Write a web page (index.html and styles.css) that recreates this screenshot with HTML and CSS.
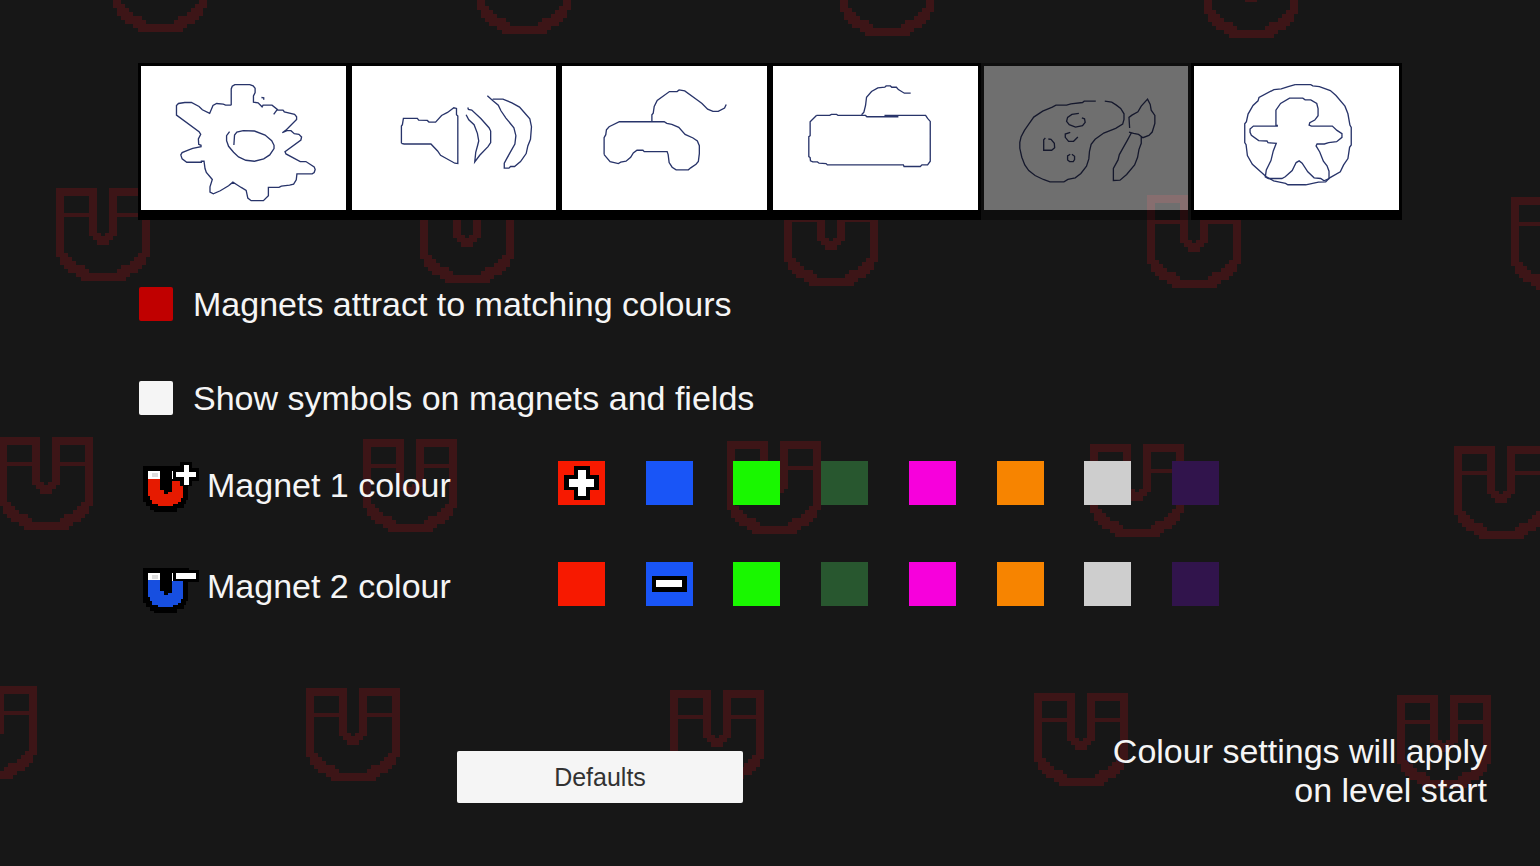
FILE: index.html
```html
<!DOCTYPE html>
<html lang="en">

<head>
    <meta charset="UTF-8">
    <meta name="viewport" content="width=device-width, initial-scale=1.0">
    <title>Settings - Colours</title>
    <link rel="stylesheet" href="styles.css">
</head>

<body>

    <!-- Background magnets -->
    <svg class="backdrop" aria-hidden="true" shape-rendering="crispEdges">
        <defs>
            <symbol id="magnet" viewBox="0 0 282 282" preserveAspectRatio="none">
                <path fill-rule="evenodd" d="M0 0H122V135H135V147H147V135H159V0H282V209H270V234H258V246H246V257H221V270H209V281H74V270H61V257H36V246H24V234H12V209H0Z
                    M24 24V75H98V24Z M184 24V75H258V24Z
                    M24 87V197H36V209H49V221H61V234H86V246H98V257H184V246H196V234H221V221H233V209H246V197H258V87H184V146H171V159H159V173H122V159H110V146H98V87Z" />
            </symbol>
        </defs>
        <use href="#magnet" x="113" y="-61" width="94" height="93" />
        <use href="#magnet" x="477" y="-59" width="94" height="93" />
        <use href="#magnet" x="840" y="-57" width="94" height="93" />
        <use href="#magnet" x="1204" y="-55" width="94" height="93" />
        <use href="#magnet" x="56" y="188" width="94" height="93" />
        <use href="#magnet" x="420" y="190" width="94" height="93" />
        <use href="#magnet" x="784" y="193" width="94" height="93" />
        <use href="#magnet" x="1147" y="195" width="94" height="93" />
        <use href="#magnet" x="1511" y="197" width="94" height="93" />
        <use href="#magnet" x="-1" y="437" width="94" height="93" />
        <use href="#magnet" x="363" y="439" width="94" height="93" />
        <use href="#magnet" x="727" y="441" width="94" height="93" />
        <use href="#magnet" x="1090" y="444" width="94" height="93" />
        <use href="#magnet" x="1454" y="446" width="94" height="93" />
        <use href="#magnet" x="-57" y="686" width="94" height="93" />
        <use href="#magnet" x="306" y="688" width="94" height="93" />
        <use href="#magnet" x="670" y="690" width="94" height="93" />
        <use href="#magnet" x="1034" y="693" width="94" height="93" />
        <use href="#magnet" x="1397" y="695" width="94" height="93" />
    </svg>

    <div class="settings">

        <nav class="tabs">
            <button type="button" class="tab" aria-label="General">
                <svg viewBox="33 32 615 434">
                    <path d="M304 150V101L307 93L315 88H360L370 92L376 99V112L371 122V141L385 143L397 155L400 150H427L443 163L432 178 M395 127L402 128V134 M443 165H460L464 170L495 178L501 185V193L468 226L458 233L472 227H484L494 236L508 238L516 246L514 255L466 290L469 297L512 320H529L554 336L557 344L554 353L548 357H502L500 375L492 388L480 391L455 394L448 398H416V423L401 438H364L354 430L349 407L334 398L320 389L309 382L296 393L271 408L250 417L240 412V396L247 374L229 353L225 341L222 319H214V322H170L156 312L152 300L156 293L178 284L188 280L213 275V271L206 268L205 252L212 238L207 230L139 180V151L145 145L164 142H184L207 154L217 164L239 175L249 151L260 145L280 147L287 150H304" />
                    <path d="M299 230L290 242V257L296 274L311 292L326 306L348 316L374 319L402 312L420 300L433 281V271L426 257L406 240L374 228L340 227L321 231L314 240L312 270" />
                </svg>
            </button>
            <button type="button" class="tab" aria-label="Sound">
                <svg viewBox="21 32 615 434">
                    <path d="M169 265V213L172 209L175 190H217L221 195L247 196L252 201H272L290 181L308 172L327 158L335 160V179L339 183V326L330 325L287 301L278 288L258 267H177L169 265" />
                    <path d="M369 157L371 163L381 165L409 191L433 218L438 228V263L430 275L405 301L390 321L393 292L399 270L402 258L398 235L388 209L372 194L364 179" />
                    <path d="M428 122L444 136L461 150L469 167L484 189L508 218L514 242L511 267L496 294L486 312L479 325V340H493L498 335L510 335L528 320L545 296L550 273L558 253L561 215L556 191L540 173L525 156L502 143L475 132H444" />
                </svg>
            </button>
            <button type="button" class="tab" aria-label="Controller">
                <svg viewBox="21 32 615 434">
                    <path d="M291 199V179L295 174L298 154L307 136L344 109H367L373 104L390 107L433 138L442 145L459 162L475 169H491L510 159L515 148" />
                    <path d="M147 299V248L152 239L154 224L162 215L193 200H328L336 205L351 208L372 217L391 238L415 249L428 258L434 272V296L431 320L424 328L408 339L401 345H364L352 337L343 323L340 299L337 290H268L264 286H246L235 294L227 307L213 319L197 322L190 326L165 320L147 299" />
                </svg>
            </button>
            <button type="button" class="tab" aria-label="Keyboard">
                <svg viewBox="15 32 615 434">
                    <path d="M281 179L288 171L293 151L296 126L311 109L330 98L351 96L355 92H368L372 96H386L392 103L410 114H429" />
                    <path d="M145 181H185L190 178H206L210 181H293L297 185H392 M350 181H474L480 190L488 199V319L480 330H463L458 335H409L407 330H178L174 326L153 325L148 321H134L127 318L126 308L122 305V245L126 242V200L145 181" />
                </svg>
            </button>
            <button type="button" class="tab selected" aria-label="Colours" aria-current="page">
                <svg viewBox="24 32 615 434">
                    <path d="M360 138H325L320 142L285 146L272 150H240L229 156L200 168L173 186L158 207L145 226L135 245L131 262V280L137 307L146 330L158 347L177 362L202 374L222 381H264L276 374L298 369L315 356L332 334L339 312L341 289L346 268L358 253L384 234L420 220L441 207L445 193V176L435 160L422 150L408 141L387 138" />
                    <path d="M309 175L288 178L275 187L272 199L280 209L299 216L320 212L328 202L326 191L318 188 M283 232L268 237V247L278 259H293L306 246 M208 249L203 254V286H227L236 278L235 265L225 253L217 252 M283 298L275 303V315L281 320H292L296 314V304L288 298" />
                    <path d="M462 219L460 187L469 180L487 170L497 153L516 132L524 148L527 165L538 181V205L530 231L520 241L502 248L489 238L474 235L460 231 M467 234L455 256L441 281L431 299L427 315L413 341V377L433 376L453 359L477 330L486 307L490 284L497 265V246" />
                </svg>
            </button>
            <button type="button" class="tab" aria-label="Accessibility">
                <svg viewBox="27 32 615 434">
                    <path d="M331 88H378L384 92L404 94L437 106L454 121L481 153L490 176L496 210L500 217V270L495 277L490 311L477 330L467 351L435 369L423 381L401 382L363 390H309L302 386L266 378L243 365L202 328L187 302L183 269L179 263V206L184 200L189 177L204 151L219 137L222 127L267 103L289 101L310 94L331 88" />
                    <path d="M279 211H273V165L287 145L314 129H354L361 134H378L396 145L400 160V182L390 195L375 203L373 210L380 213H443L457 226L472 236V247L456 260L432 263L419 267H397L394 273L405 291L416 319L427 333L433 349V371L418 378L408 371L388 369L369 351L352 325L343 318L334 323L322 347L301 366L291 371H250L241 366L244 345L258 317L265 288L274 265L249 263L246 258L221 257L199 241L195 232V222L205 213H279" />
                </svg>
            </button>
        </nav>

        <label class="option">
            <input type="checkbox" checked>
            <span>Magnets attract to matching colours</span>
        </label>

        <label class="option">
            <input type="checkbox">
            <span>Show symbols on magnets and fields</span>
        </label>

        <div class="magnet-row" role="radiogroup" aria-labelledby="magnet1">
            <svg class="magnet-icon" viewBox="36 33 174 156" shape-rendering="crispEdges">
                <path fill="#000" d="M39 48H150V36H186V54H207V93H186V109H175V149H169V161H161V173H141V185H72V179H60V167H48V155H39Z" />
                <path fill="#e61a00" d="M54 86H89V120H101V132H113V126H126V93H149V109H159V143H153V155H143V161H130V168H83V161H66V149H60V137H54Z" />
                <path fill="#fff" d="M54 63H89V86H54Z M126 63H130V87H126Z M161 45H176V67H198V81H176V104H161V81H138V67H161Z" />
                <path fill="#ddd" d="M66 69H84V81H66Z" />
            </svg>
            <span class="magnet-name" id="magnet1">Magnet 1 colour</span>
            <div class="swatches">
                <label class="swatch red">
                    <input type="radio" name="magnet1" aria-label="Red" checked>
                    <svg viewBox="53 95 140 130" shape-rendering="crispEdges">
                        <path fill="#000" d="M101 110H147V136H176V182H147V212H101V182H72V136H101Z" />
                        <path fill="#fff" d="M112 121H135V148H161V171H135V198H112V171H85V148H112Z" />
                    </svg>
                </label>
                <label class="swatch blue"><input type="radio" name="magnet1" aria-label="Blue"></label>
                <label class="swatch green"><input type="radio" name="magnet1" aria-label="Green"></label>
                <label class="swatch forest"><input type="radio" name="magnet1" aria-label="Dark green"></label>
                <label class="swatch pink"><input type="radio" name="magnet1" aria-label="Pink"></label>
                <label class="swatch orange"><input type="radio" name="magnet1" aria-label="Orange"></label>
                <label class="swatch grey"><input type="radio" name="magnet1" aria-label="Grey"></label>
                <label class="swatch purple"><input type="radio" name="magnet1" aria-label="Purple"></label>
            </div>
        </div>

        <div class="magnet-row" role="radiogroup" aria-labelledby="magnet2">
            <svg class="magnet-icon" viewBox="36 336 174 156" shape-rendering="crispEdges">
                <path fill="#000" d="M39 354H176V360H207V396H175V452H169V464H161V476H141V488H72V482H60V470H48V458H39Z" />
                <path fill="#174fe0" d="M54 391H89V423H101V435H113V429H126V394H159V446H153V458H143V464H130V471H83V464H66V452H60V440H54Z" />
                <path fill="#fff" d="M54 369H89V391H54Z M126 369H130V392H126Z M138 370H198V387H138Z" />
                <path fill="#ddd" d="M66 374H84V386H66Z" />
            </svg>
            <span class="magnet-name" id="magnet2">Magnet 2 colour</span>
            <div class="swatches">
                <label class="swatch red"><input type="radio" name="magnet2" aria-label="Red"></label>
                <label class="swatch blue">
                    <input type="radio" name="magnet2" aria-label="Blue" checked>
                    <svg viewBox="317 396 140 130" shape-rendering="crispEdges">
                        <path fill="#000" d="M336 437H438V486H336Z" />
                        <path fill="#fff" d="M348 450H423V471H348Z" />
                    </svg>
                </label>
                <label class="swatch green"><input type="radio" name="magnet2" aria-label="Green"></label>
                <label class="swatch forest"><input type="radio" name="magnet2" aria-label="Dark green"></label>
                <label class="swatch pink"><input type="radio" name="magnet2" aria-label="Pink"></label>
                <label class="swatch orange"><input type="radio" name="magnet2" aria-label="Orange"></label>
                <label class="swatch grey"><input type="radio" name="magnet2" aria-label="Grey"></label>
                <label class="swatch purple"><input type="radio" name="magnet2" aria-label="Purple"></label>
            </div>
        </div>

    </div>

    <div class="footer">
        <button type="button" class="defaults">Defaults</button>
        <p class="note">Colour settings will apply<br>on level start</p>
    </div>

</body>

</html>
```
FILE: styles.css
```css
* {
    box-sizing: border-box;
}

body {
    font-family: "Liberation Sans", Arial, sans-serif;
    font-size: 34px;
    margin: 0;
    min-height: 100vh;
    display: flex;
    flex-direction: column;
    background-color: #171717;
    color: #f5f5f5;
}

.backdrop {
    position: absolute;
    top: 0;
    left: 0;
    z-index: -1;
    width: 100%;
    height: 100%;
    fill: #3d1517;
}

.settings {
    padding: 63px 138px 0;
}

/* Tabs */
.tabs {
    display: flex;
    margin-bottom: 67px;
}

.tab {
    flex: 1;
    padding: 0;
    border: 3px solid #000;
    border-bottom-width: 10px;
    background-color: #fff;
    cursor: pointer;
}

.tab.selected {
    opacity: 0.38;
}

.tab svg {
    display: block;
    width: 100%;
    height: 144px;
    fill: none;
    stroke: #28346a;
    stroke-width: 4;
}

.tab.selected svg {
    stroke: #141c50;
}

/* Checkboxes */
.option {
    display: flex;
    align-items: center;
    gap: 20px;
    height: 34px;
    margin-bottom: 60px;
    padding-left: 1px;
}

.option + .magnet-row {
    margin-top: -14px;
}

.option input {
    appearance: none;
    width: 34px;
    height: 34px;
    margin: 0;
    border-radius: 2px;
    background-color: #f5f5f5;
}

.option input:checked {
    background-color: #c00000;
}

/* Magnet colours */
.magnet-row {
    display: flex;
    align-items: flex-start;
    margin-bottom: 49px;
    padding-left: 4px;
}

.magnet-icon {
    width: 58px;
    height: 52px;
}

.magnet-name {
    width: 358px;
    padding-left: 7px;
    line-height: 48px;
}

.swatches {
    flex: 0 1 661px;
    display: flex;
    justify-content: space-between;
}

.swatch {
    display: grid;
    width: 47px;
    height: 44px;
}

.swatch input,
.swatch svg {
    grid-area: 1 / 1;
    width: 100%;
    height: 100%;
    margin: 0;
}

.swatch input {
    appearance: none;
}

.red {
    background-color: #f71900;
}

.blue {
    background-color: #1955f7;
}

.green {
    background-color: #19f700;
}

.forest {
    background-color: #28572f;
}

.pink {
    background-color: #f700dc;
}

.orange {
    background-color: #f78400;
}

.grey {
    background-color: #cecece;
}

.purple {
    background-color: #31144c;
}

/* Footer */
.footer {
    display: flex;
    justify-content: space-between;
    align-items: flex-end;
    margin-top: auto;
    padding: 0 53px 56px 457px;
}

.defaults {
    width: 286px;
    height: 52px;
    margin-bottom: 7px;
    border: none;
    border-radius: 2px;
    background-color: #f5f5f5;
    color: #323232;
    font-family: inherit;
    font-size: 25px;
    cursor: pointer;
}

.note {
    margin: 0;
    line-height: 39px;
    text-align: right;
}
```
